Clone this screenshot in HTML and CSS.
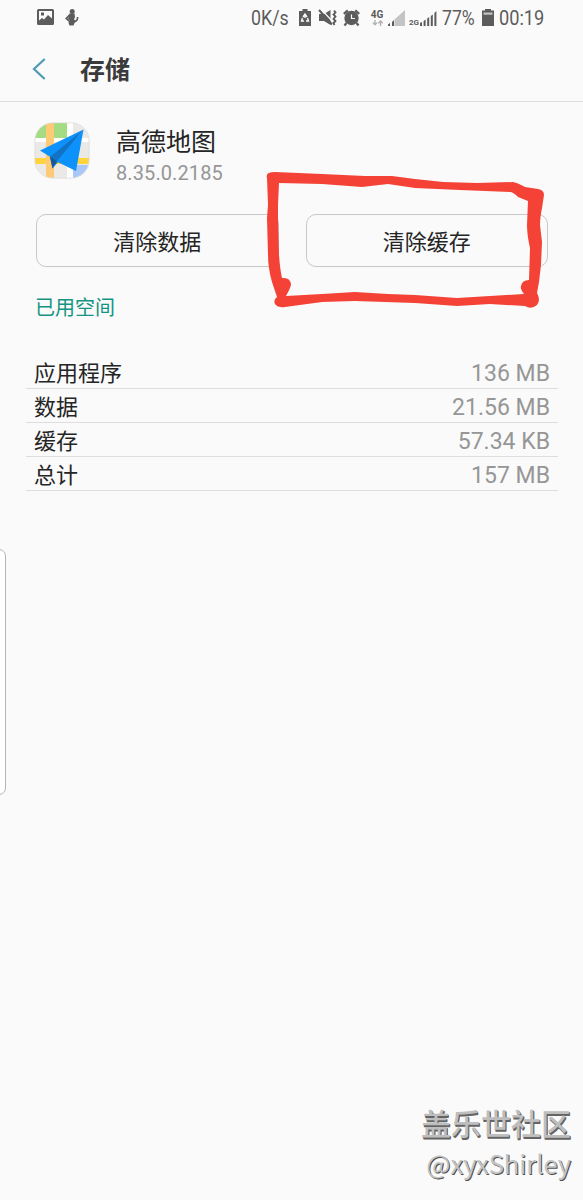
FILE: index.html
```
<!DOCTYPE html>
<html lang="zh-CN">
<head>
    <meta charset="UTF-8">
    <meta name="viewport" content="width=device-width, initial-scale=1.0">
    <title>存储</title>
    <link rel="stylesheet" href="styles.css">
</head>
<body>
    <div class="screen">
        <div class="status-bar">
            <div class="notifications">
                <svg width="17" height="17" viewBox="0 0 17 17">
                    <path fill="#5c5c5c" fill-rule="evenodd" d="M1.5 0h14Q17 0 17 1.5v13q0 1.500-1.500 1.500h-14Q0 16 0 14.500v-13Q0 0 1.500 0zM2 2v9.500l3-2.500 2 1.500L11 6l4 3.500V2zM4 3.500h3v3H4z"/>
                </svg>
                <svg width="14" height="17" viewBox="0 0 14 17">
                    <circle cx="7.200" cy="2.500" r="2.500" fill="#5c5c5c"/>
                    <path fill="#5c5c5c" d="M4.500 4.500h5l.500 3.500-1 2.500 1.500 1-1 2.500-1 2.500H4.500l-1-2.500 1-3-1.500-1z"/>
                    <path fill="none" stroke="#5c5c5c" stroke-width="1.700" d="M5 5.500 1.200 9.500l3 2.500M8 13q5-.500 4.500-5"/>
                </svg>
            </div>
            <div class="status-right">
                <span class="status-text speed">0K/s</span>
                <svg class="battery-saver" width="12" height="18" viewBox="0 0 12 18">
                    <path fill="#5c5c5c" d="M3.500 0h5v2H12v15H0V2h3.500z"/>
                    <path fill="none" stroke="#fafafa" stroke-width="1.400" d="M4 8l2-3 2 3M3.500 9l-1 3H5M8.500 9l1 3H7M6 7v2"/>
                </svg>
                <svg class="mute" width="19" height="18" viewBox="0 0 19 18">
                    <path fill="#5c5c5c" d="M1 5h5L12.500 1v15L6 12H1z"/>
                    <path stroke="#fafafa" stroke-width="1.300" d="M3 0l12 13"/>
                    <path stroke="#5c5c5c" stroke-width="2" d="M1 1l13 14.500"/>
                    <path fill="none" stroke="#5c5c5c" stroke-width="1.800" d="M16 1.500l1.500 2-2 2 2 2-2 2.500 2 2-2 2 1 2"/>
                </svg>
                <svg class="alarm" width="17" height="18" viewBox="0 0 17 18">
                    <circle cx="8.500" cy="9" r="7.200" fill="#5c5c5c"/>
                    <path fill="none" stroke="#5c5c5c" stroke-width="2.200" d="M.800 4.800l4-3.500M16.200 4.800l-4-3.500M3.500 14l-2 2.500M13.500 14l2 2.500"/>
                    <path fill="none" stroke="#fafafa" stroke-width="1.200" d="M8.500 5.500v4h3.500"/>
                </svg>
                <span class="network">
                    <span class="network-4g">4G</span>
                    <svg width="11" height="6" viewBox="0 0 11 6">
                        <path fill="none" stroke="#b0b0b0" stroke-width="1.300" d="M3 0v4M.800 2.600L3 4.800l2.200-2.200M8.500 6V1.500M6.300 3.200L8.500 1l2.200 2.200"/>
                    </svg>
                </span>
                <svg class="signal" width="17" height="16" viewBox="0 0 17 16">
                    <path fill="#c4c4c4" d="M6.500 9.500L17 0v16H6.500z"/>
                    <path fill="#5c5c5c" d="M0 14.500l2-1.500v3H0zM4 12l2-2v6H4z"/>
                </svg>
                <span class="network-2g">2G</span>
                <svg class="bars" width="17" height="15" viewBox="0 0 17 15">
                    <path fill="#5c5c5c" d="M0 12l2-1v4H0zM3.600 10l2-1.500V15h-2zM7.200 7.500l2-1.500v9h-2zM10.800 5l2-1.500V15h-2zM14.400 2l2-2v15h-2z"/>
                </svg>
                <span class="status-text percent">77%</span>
                <svg class="battery" width="12" height="18" viewBox="0 0 12 18">
                    <path fill="#5c5c5c" d="M3 0h6v1.500h3V17H0V1.500h3z"/>
                    <path fill="#c4c4c4" d="M1.500 3.500h9v2.200h-9z"/>
                </svg>
                <span class="status-text clock">00:19</span>
            </div>
        </div>

        <header class="header">
            <svg width="14" height="22" viewBox="0 0 14 22">
                <path fill="none" stroke="#4f9ab5" stroke-width="2.200" d="M12.700 1L2 11l10.700 10"/>
            </svg>
            <h1>存储</h1>
        </header>

        <main>
            <div class="app-info">
                <svg class="app-icon" width="56" height="57" viewBox="0 0 56 57">
                    <defs>
                        <clipPath id="iconShape"><rect x="1" y="1" width="54" height="55" rx="18"/></clipPath>
                    </defs>
                    <g clip-path="url(#iconShape)">
                        <path fill="#ebe9e6" d="M0 0h56v57H0z"/>
                        <path fill="#a3dc83" d="M0 0h33v16H0z"/>
                        <path fill="#fff" d="M0 16h56v4H0zM33 0h6v57h-6z"/>
                        <path fill="#ffd33d" d="M0 36h56v6H0z"/>
                        <path fill="#ffca75" d="M12 0h8v57h-8z"/>
                        <path fill="#a9c8fa" d="M39 43h17v14H39z"/>
                    </g>
                    <rect x=".800" y=".800" width="54.400" height="55.400" rx="18" fill="none" stroke="#dcdcdc" stroke-width=".800"/>
                    <path fill="#0d91fb" d="M49.500 7.500L6 28.500l12 7.500z"/>
                    <path fill="#1272c6" d="M49.500 7.500L16 35l2.500 11.500 5-6z"/>
                    <path fill="#0d91fb" d="M49.500 7.500L22.500 39.500 42 49z"/>
                    <path fill="#16599a" d="M16 34.500l6.500 4.500-4 7.500z"/>
                </svg>
                <div class="app-text">
                    <div class="app-name">高德地图</div>
                    <div class="app-version">8.35.0.2185</div>
                </div>
            </div>

            <div class="actions">
                <button>清除数据</button>
                <button>清除缓存</button>
                <svg class="marker" width="583" height="150" viewBox="0 165 583 150">
                    <path fill="#f44336" fill-rule="evenodd" d="M267 178Q265 172 275 172L322 174 365 176 392 176 415 179 443 182 477 183 513 182Q518 183 525 187L538 189Q544 190 544 195L542 208Q540 218 540 225L542 242 541 265 539 282 537 293Q541 300 537 305 531 310 525 306L490 304 457 306 415 303 355 301 322 302 285 307Q278 308 275 304 273 300 277 297L272 282Q268 268 268 255L267 218 268 205zM279 183L278 205 278 218 279 255Q280 269 282 278 290 277 291 284 291 287 286 296L322 294 355 292 388 294 415 295 457 298 490 296 524 294Q520 289 521 286 522 280 529 280L530 248Q527 235 527 225L528 201 518 197Q513 192 510 192L460 190 415 188 388 184 362 187 322 184z"/>
                </svg>
            </div>

            <h2>已用空间</h2>

            <ul class="usage">
                <li><span>应用程序</span><span class="size">136 MB</span></li>
                <li><span>数据</span><span class="size">21.56 MB</span></li>
                <li><span>缓存</span><span class="size">57.34 KB</span></li>
                <li><span>总计</span><span class="size">157 MB</span></li>
            </ul>
        </main>

        <div class="edge-handle"></div>
        <div class="watermark">
            <div class="community">盖乐世社区</div>
            <div class="user">@xyxShirley</div>
        </div>
    </div>
</body>
</html>
```

FILE: styles.css
```
:root {
    --bg-color: #fafafa;
    --text-color: #252525;
    --muted-color: #969696;
    --status-color: #5c5c5c;
    --accent-color: #159482;
}
* {
    box-sizing: border-box;
}
body {
    margin: 0;
    font-family: Roboto, "Noto Sans CJK SC", sans-serif;
    background-color: var(--bg-color);
    color: var(--text-color);
}
svg {
    display: block;
    flex-shrink: 0;
}
.screen {
    position: relative;
    height: 1200px;
    overflow: hidden;
}
.status-bar {
    display: flex;
    justify-content: space-between;
    height: 37px;
    padding: 0 38px 0 37px;
    color: var(--status-color);
}
.notifications {
    display: flex;
    gap: 11px;
    padding-top: 9px;
}
.status-right {
    display: flex;
    align-items: center;
}
.status-text {
    font-size: 20px;
    line-height: 37px;
    white-space: nowrap;
    transform-origin: left center;
}
.speed {
    width: 48px;
    transform: scaleX(0.89);
}
.mute {
    margin-left: 7px;
}
.alarm {
    margin-left: 6px;
}
.battery-saver,
.mute,
.alarm,
.battery {
    margin-bottom: 1px;
}
.network {
    display: flex;
    flex-direction: column;
    align-items: center;
    width: 14px;
    margin: 0 0 3px 10px;
}
.network-4g {
    font-size: 10px;
    font-weight: 700;
    line-height: 11px;
}
.signal {
    margin: 0 0 2px 4px;
}
.network-2g {
    width: 11px;
    margin: 9px 0 0 4px;
    font-size: 8px;
    font-weight: 700;
    line-height: 10px;
}
.bars {
    margin-bottom: 1px;
}
.percent {
    width: 40px;
    margin-left: 5px;
    transform: scaleX(0.88);
}
.clock {
    width: 46px;
    margin-left: 5px;
    transform: scaleX(0.91);
}
.header {
    display: flex;
    align-items: center;
    gap: 34px;
    height: 65px;
    padding: 0 0 1px 32px;
    border-bottom: 1px solid #dedede;
}
h1 {
    margin: 0;
    padding-top: 4px;
    font-size: 25px;
    font-weight: 700;
    line-height: 36px;
    color: #3a3a3a;
}
.app-info {
    display: flex;
    height: 112px;
    padding: 20px 34px 0;
}
.app-text {
    margin: 2px 0 0 26px;
}
.app-name {
    font-size: 25px;
    line-height: 38px;
}
.app-version {
    font-size: 20px;
    line-height: 23px;
    letter-spacing: 0.1px;
    color: var(--muted-color);
}
.actions {
    position: relative;
    display: flex;
    gap: 27px;
    padding: 0 35px 0 36px;
}
button {
    flex: 1;
    height: 53px;
    padding: 0 0 2px;
    border: 1px solid #c8c8c8;
    border-radius: 10px;
    background: none;
    font-family: inherit;
    font-size: 22px;
    color: var(--text-color);
}
.marker {
    position: absolute;
    left: 0;
    top: -49px;
}
h2 {
    margin: 25px 0 0 35px;
    font-size: 20px;
    font-weight: 400;
    line-height: 32px;
    color: var(--accent-color);
}
.usage {
    margin: 31px 25px 0 26px;
    padding: 0;
    list-style: none;
}
.usage li {
    display: flex;
    justify-content: space-between;
    height: 34px;
    padding: 0 8px;
    border-bottom: 1px solid #dedede;
    font-size: 22px;
    line-height: 38px;
}
.usage .size {
    font-size: 23px;
    color: var(--muted-color);
}
.edge-handle {
    position: absolute;
    left: -10px;
    top: 549px;
    width: 16px;
    height: 246px;
    border: 1px solid #b4b4b4;
    border-radius: 7px;
    background-color: #fff;
}
.watermark {
    position: absolute;
    right: 12px;
    top: 1102px;
    text-align: right;
    font-family: "Noto Sans CJK SC", sans-serif;
}
.community {
    font-size: 30px;
    font-weight: 500;
    line-height: 40px;
    color: #bebebe;
    text-shadow: 1px 1px 0 #646464, 1px 2px 0 #646464;
}
.user {
    font-size: 25.5px;
    line-height: 42px;
    color: #c4c4c4;
    text-shadow: 1px 1px 0 #505050;
}
```
